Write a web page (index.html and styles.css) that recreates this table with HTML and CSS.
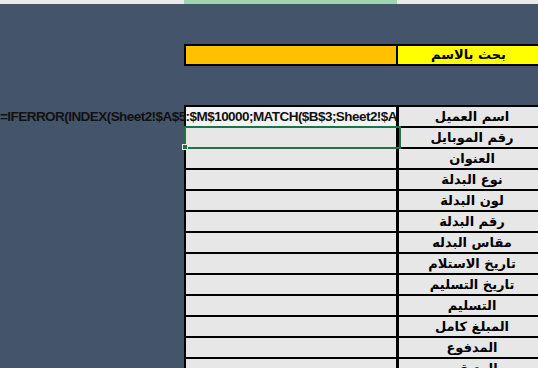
FILE: index.html
```html
<!DOCTYPE html>
<html lang="ar">
<head>
<meta charset="utf-8">
<title>بحث بالاسم</title>
<link rel="stylesheet" href="styles.css">
</head>
<body>
<div class="sheet">
  <div class="colbar"><div class="colbar-sel"></div></div>
  <div class="search">
    <div class="search-input"></div>
    <div class="search-label">بحث بالاسم</div>
  </div>
  <div class="table">
    <div class="row">
      <div class="val val-formula"><span class="formula">=IFERROR(INDEX(Sheet2!$A$5:$M$10000;MATCH($B$3;Sheet2!$A</span></div>
      <div class="lbl">اسم العميل</div>
    </div>
    <div class="row">
      <div class="val val-selected"></div>
      <div class="lbl">رقم الموبايل</div>
    </div>
    <div class="row"><div class="val"></div><div class="lbl">العنوان</div></div>
    <div class="row"><div class="val"></div><div class="lbl">نوع البدلة</div></div>
    <div class="row"><div class="val"></div><div class="lbl">لون البدلة</div></div>
    <div class="row"><div class="val"></div><div class="lbl">رقم البدلة</div></div>
    <div class="row"><div class="val"></div><div class="lbl">مقاس البدله</div></div>
    <div class="row"><div class="val"></div><div class="lbl">تاريخ الاستلام</div></div>
    <div class="row"><div class="val"></div><div class="lbl">تاريخ التسليم</div></div>
    <div class="row"><div class="val"></div><div class="lbl">التسليم</div></div>
    <div class="row"><div class="val"></div><div class="lbl">المبلغ كامل</div></div>
    <div class="row"><div class="val"></div><div class="lbl">المدفوع</div></div>
    <div class="row"><div class="val"></div><div class="lbl">المتبقي</div></div>
  </div>
</div>
</body>
</html>
```
FILE: styles.css
```css
html, body {
  margin: 0;
  padding: 0;
  width: 538px;
  height: 368px;
  overflow: hidden;
  background: #44546a;
}

.sheet {
  width: 560px;
  font-family: "DejaVu Sans", "Noto Sans", sans-serif;
}

.colbar {
  height: 4px;
  background: #e9e9e9;
  display: flex;
}

.colbar-sel {
  margin-left: 184px;
  width: 213px;
  background: #9fd4b3;
}

.search {
  margin-top: 40px;
  margin-left: 184px;
  width: 361px;
  height: 18px;
  display: flex;
  border: 2px solid #000;
}

.search-input {
  width: 210px;
  background: #ffc000;
  border-right: 2px solid #000;
}

.search-label {
  flex: 1;
  background: #ffff00;
  font-size: 13px;
  font-weight: bold;
  line-height: 18px;
  text-align: center;
  padding-right: 8px;
  color: #000;
  direction: rtl;
}

.table {
  margin-top: 39px;
  margin-left: 184px;
  width: 359px;
  border-top: 2px solid #000;
  border-left: 2px solid #000;
}

.row {
  display: flex;
  height: 19px;
  border-bottom: 2px solid #000;
}

.val {
  width: 210px;
  background: #e7e7e7;
  border-right: 3px solid #000;
}

.val-formula {
  background: #f3f3f3;
  clip-path: inset(0 0 0 -200px);
}

.formula {
  display: block;
  margin-left: -186px;
  white-space: nowrap;
  font-family: "Liberation Sans", Arial, sans-serif;
  font-weight: bold;
  font-size: 13.5px;
  letter-spacing: -0.55px;
  line-height: 19px;
  color: #111;
}

.val-selected {
  position: relative;
  z-index: 1;
  outline: 2px solid #217346;
}

.val-selected::after {
  content: "";
  position: absolute;
  left: -4px;
  bottom: -3px;
  width: 4px;
  height: 4px;
  background: #217346;
  border: 1px solid #e7e7e7;
}

.lbl {
  flex: 1;
  background: #e7e7e7;
  font-size: 13px;
  font-weight: bold;
  line-height: 19px;
  text-align: center;
  color: #000;
  direction: rtl;
}
```
